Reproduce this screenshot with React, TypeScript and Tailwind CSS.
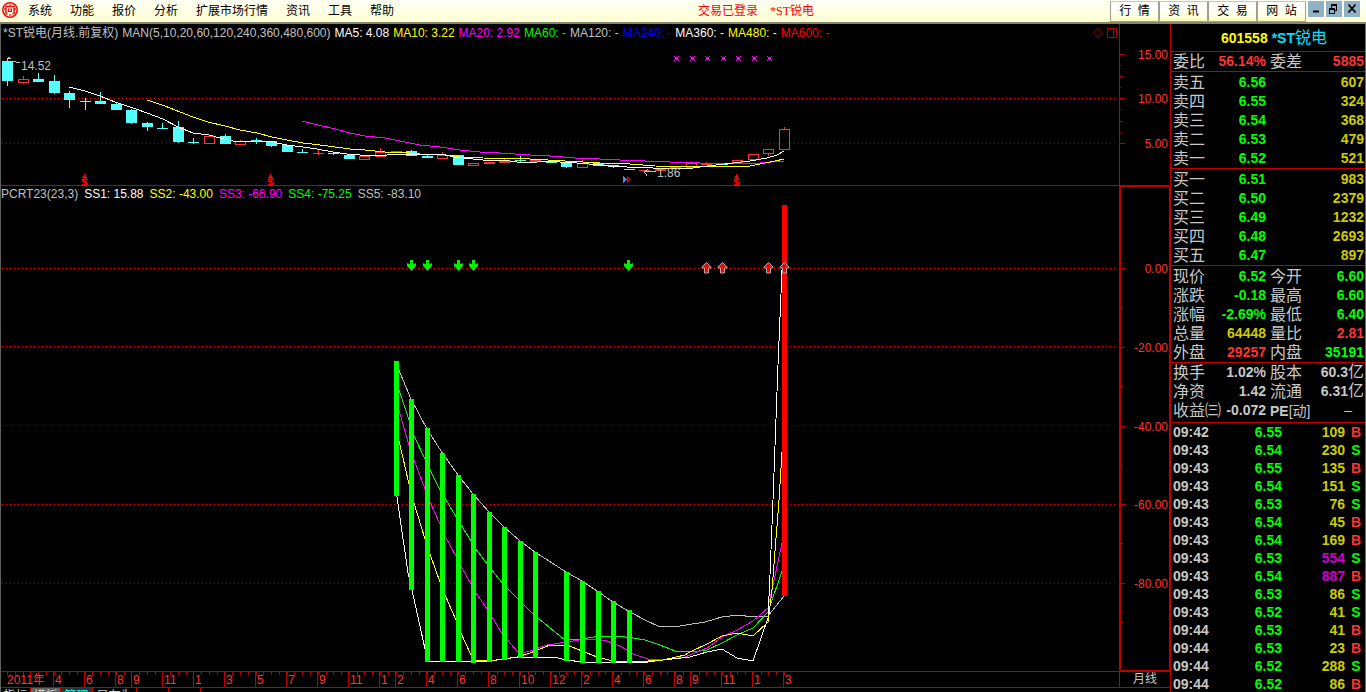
import type { ReactNode } from 'react';

type Candle = {
  kind: 'down' | 'up' | 'flat';
  high: number;
  top: number;
  bottom: number;
  low: number;
};

const menu = ['系统', '功能', '报价', '分析', '扩展市场行情', '资讯', '工具', '帮助'];
const quickLinks = ['行  情', '资  讯', '交  易', '网  站'];

const maLegend = [
  { text: 'MA5: 4.08', color: 'text-white' },
  { text: 'MA10: 3.22', color: 'text-[#ffff00]' },
  { text: 'MA20: 2.92', color: 'text-[#ff00ff]' },
  { text: 'MA60: -', color: 'text-[#00ff00]' },
  { text: 'MA120: -', color: 'text-[#c0c0c0]' },
  { text: 'MA240: -', color: 'text-[#0000ff]' },
  { text: 'MA360: -', color: 'text-white' },
  { text: 'MA480: -', color: 'text-[#ffff00]' },
  { text: 'MA600: -', color: 'text-[#ff0000]' },
];

const ssLegend = [
  { text: 'SS1: 15.88', color: 'text-white' },
  { text: 'SS2: -43.00', color: 'text-[#ffff00]' },
  { text: 'SS3: -66.90', color: 'text-[#ff00ff]' },
  { text: 'SS4: -75.25', color: 'text-[#00ff00]' },
  { text: 'SS5: -83.10', color: 'text-[#c0c0c0]' },
];

// [kind, high, top, bottom, low], one per month
const candleRows: [Candle['kind'], number, number, number, number][] = [
  ['down', 58, 61, 81, 86],
  ['up', 76, 79, 83, 84],
  ['down', 73, 79, 82, 82],
  ['down', 75, 81, 93, 94],
  ['down', 91, 93, 100, 108],
  ['down', 98, 101, 102, 110],
  ['down', 92, 101, 104, 104],
  ['down', 102, 104, 110, 110],
  ['down', 109, 110, 123, 124],
  ['down', 122, 123, 127, 131],
  ['down', 123, 128, 129, 129],
  ['down', 121, 127, 142, 143],
  ['down', 138, 142, 143, 144],
  ['up', 135, 136, 144, 144],
  ['down', 134, 136, 144, 144],
  ['up', 140, 141, 145, 145],
  ['down', 138, 140, 141, 144],
  ['down', 141, 141, 146, 147],
  ['down', 145, 145, 152, 152],
  ['down', 149, 152, 153, 153],
  ['flat', 149, 153, 154, 155],
  ['down', 153, 153, 154, 155],
  ['down', 155, 155, 159, 159],
  ['up', 156, 156, 160, 160],
  ['up', 148, 152, 157, 157],
  ['flat', 151, 151, 153, 153],
  ['down', 150, 151, 156, 156],
  ['down', 155, 156, 158, 158],
  ['up', 152, 155, 159, 159],
  ['down', 155, 155, 165, 165],
  ['up', 163, 163, 166, 166],
  ['flat', 162, 162, 164, 164],
  ['flat', 159, 160, 163, 163],
  ['down', 156, 160, 161, 162],
  ['flat', 159, 160, 162, 162],
  ['down', 161, 161, 163, 163],
  ['down', 162, 162, 167, 168],
  ['up', 160, 163, 168, 168],
  ['down', 162, 163, 166, 166],
  ['down', 165, 165, 167, 168],
  ['down', 169, 169, 170, 170],
  ['flat', 170, 170, 171, 171],
  ['flat', 169, 169, 171, 171],
  ['flat', 167, 167, 169, 169],
  ['up', 163, 163, 168, 168],
  ['flat', 162, 163, 165, 165],
  ['down', 163, 163, 165, 165],
  ['up', 160, 160, 163, 163],
  ['up', 154, 154, 160, 160],
  ['up', 149, 149, 154, 156],
  ['up', 127, 129, 150, 150],
];

const candles: Candle[] = candleRows.map(([kind, high, top, bottom, low]) => ({ kind, high, top, bottom, low }));

const maLines = [
  {
    color: '#ff00ff',
    points:
      '302,121 318,125 335,129 350,133 365,136 385,138 400,141 420,145 440,147 460,150 480,152 500,153 530,155 550,156 575,158 600,159 620,160 645,161 670,162 700,163 730,164 760,163 784,161',
  },
  {
    color: '#ffff00',
    points:
      '147,100 165,106 180,112 193,117 208,122 225,126 240,130 257,133 272,137 287,140 303,143 320,145 335,147 350,149 365,150 385,152 400,152 420,154 445,155 460,157 483,158 530,159 565,161 600,163 630,164 655,166 700,167 730,166 750,166 765,163 775,161 784,159',
  },
  {
    color: '#ffffff',
    points:
      '69,87 85,91 100,96 115,102 133,108 147,113 163,119 178,127 193,133 209,135 220,138 233,141 272,141 277,143 287,145 303,147 317,149 333,152 347,154 360,155 387,155 390,154 400,154 418,155 423,154 443,154 453,157 483,160 510,161 517,162 537,162 543,161 560,162 577,163 600,165 610,166 627,167 653,168 680,169 693,168 707,166 733,163 750,161 767,158 777,155 784,151',
  },
];

const ssLines = [
  {
    color: '#c0c0c0',
    points:
      '396,363 411,399 427,429 443,454 458,475 473,494 489,512 504,527 520,541 535,552 566,572 582,581 597,591 613,602 630,612 645,620 660,627 680,626 705,622 722,617 738,615 753,617 768,616 784,596',
  },
  {
    color: '#00ff00',
    points:
      '396,381 399,390 409,420 414,436 425,459 430,470 440,490 449,505 461,525 471,541 476,549 487,564 503,584 518,599 534,615 565,640 582,639 600,636 617,636 633,638 645,640 660,645 675,651 692,652 707,650 722,643 737,635 753,628 768,612 782,571 784,565',
  },
  {
    color: '#ff00ff',
    points:
      '396,400 399,410 409,445 414,460 425,489 430,502 440,524 445,536 456,556 461,566 471,584 476,593 487,609 492,617 503,635 518,652 522,653 530,651 547,645 567,642 585,639 607,641 622,647 633,654 648,659 665,660 685,657 707,648 722,637 737,630 753,621 768,608 773,585 782,543 784,535',
  },
  {
    color: '#ffffff',
    points:
      '396,490 408,573 412,590 425,649 427,661 460,661 472,662 490,661 503,659 520,657 553,657 567,660 582,662 648,662 663,660 690,657 707,652 722,649 737,658 753,661 768,618 770,575 773,500 778,365 782,270 784,206',
  },
  {
    color: '#ffff00',
    points:
      '396,430 399,441 409,484 414,503 425,539 430,554 440,582 445,595 456,620 461,633 471,655 473,660 497,660 517,657 530,653 550,645 567,645 582,651 597,657 613,661 633,662 648,661 663,660 685,655 690,652 707,644 722,636 737,633 753,636 768,622 772,590 779,500 784,420',
  },
];

// [month index, top, bottom]
const bars = [
  [25, 361, 496],
  [26, 399, 590],
  [27, 428, 662],
  [28, 453, 662],
  [29, 475, 662],
  [30, 494, 663],
  [31, 512, 662],
  [32, 527, 660],
  [33, 541, 658],
  [34, 552, 658],
  [36, 572, 661],
  [37, 581, 663],
  [38, 591, 663],
  [39, 601, 663],
  [40, 610, 663],
];

const months: [number, string][] = [
  [53, '4'], [84, '6'], [115, '8'], [131, '9'], [162, '11'], [193, '1'], [224, '3'], [255, '5'], [286, '7'],
  [317, '9'], [348, '11'], [379, '1'], [395, '2'], [426, '4'], [457, '6'], [488, '8'], [519, '10'], [550, '12'],
  [581, '2'], [612, '4'], [643, '6'], [674, '8'], [690, '9'], [721, '11'], [752, '1'], [783, '3'],
];

const asks = [
  ['卖五', '6.56', '607'],
  ['卖四', '6.55', '324'],
  ['卖三', '6.54', '368'],
  ['卖二', '6.53', '479'],
  ['卖一', '6.52', '521'],
];

const bids = [
  ['买一', '6.51', '983'],
  ['买二', '6.50', '2379'],
  ['买三', '6.49', '1232'],
  ['买四', '6.48', '2693'],
  ['买五', '6.47', '897'],
];

const green = 'text-[#00ff00]';
const red = 'text-[#ff3333]';
const yellow = 'text-[#cccc00]';
const silver = 'text-[#c8c8c8]';

type StatRow = [ReactNode, ReactNode, string, ReactNode, ReactNode, string];

const ratio: StatRow[] = [['委比', '56.14%', red, '委差', '5885', red]];

const quote: StatRow[] = [
  ['现价', '6.52', green, '今开', '6.60', green],
  ['涨跌', '-0.18', green, '最高', '6.60', green],
  ['涨幅', '-2.69%', green, '最低', '6.40', green],
  ['总量', '64448', yellow, '量比', '2.81', red],
  ['外盘', '29257', red, '内盘', '35191', green],
];

const basics: StatRow[] = [
  ['换手', '1.02%', silver, '股本', <Yi key="y">60.3</Yi>, silver],
  ['净资', '1.42', silver, '流通', <Yi key="y">6.31</Yi>, silver],
  [
    '收益㈢',
    '-0.072',
    silver,
    <span key="pe" className="text-sm leading-none"><b>PE</b>[动]</span>,
    <span key="d" className="pr-3 leading-none font-normal">–</span>,
    silver,
  ],
];

const ticks = [
  ['09:42', '6.55', '109', 'B'],
  ['09:43', '6.54', '230', 'S'],
  ['09:43', '6.55', '135', 'B'],
  ['09:43', '6.54', '151', 'S'],
  ['09:43', '6.53', '76', 'S'],
  ['09:43', '6.54', '45', 'B'],
  ['09:43', '6.54', '169', 'B'],
  ['09:43', '6.53', '554', 'S'],
  ['09:43', '6.54', '887', 'B'],
  ['09:43', '6.53', '86', 'S'],
  ['09:43', '6.52', '41', 'S'],
  ['09:44', '6.53', '41', 'B'],
  ['09:44', '6.53', '23', 'B'],
  ['09:44', '6.52', '288', 'S'],
  ['09:44', '6.52', '86', 'B'],
];

const monthX = (i: number) => 7 + Math.round(i * 15.54);

function Yi({ children }: { children: ReactNode }) {
  return (
    <>
      {children}
      <span className="text-base leading-none font-normal">亿</span>
    </>
  );
}

function GridLine({ y, dim }: { y: number; dim?: boolean }) {
  return (
    <line x1="2" x2="100%" y1={y + 0.5} y2={y + 0.5} stroke={dim ? '#900000' : '#f00000'} strokeDasharray="1 3" />
  );
}

function BuyMark({ x }: { x: number }) {
  return (
    <g transform={`translate(${x} 174)`}>
      <path d="M0 3h1V2h1V0h1v2h1v1h1v1H0z" fill="#ff0000" />
      <path
        d="M5.500 6.500c0-2-5-2-5 0s5 1.500 5 3.500-5 2-5 0M3 4v8"
        fill="none"
        stroke="#ff0000"
        strokeWidth="1.500"
        shapeRendering="auto"
      />
    </g>
  );
}

function PriceChart() {
  return (
    <svg className="block w-full flex-1" shapeRendering="crispEdges">
      <g transform="translate(-1 -42)">
        <GridLine y={98} />
        <GridLine y={143} dim />
        {candles.map((c, i) => {
          const x = monthX(i);
          const color = c.kind === 'down' ? '#54ffff' : '#ff3232';
          return (
            <g key={i}>
              <line x1={x + 0.5} x2={x + 0.5} y1={c.high} y2={c.low} stroke={color} />
              {c.kind === 'up' ? (
                <rect x={x - 4.5} y={c.top + 0.5} width="10" height={c.bottom - c.top - 1} fill="#000" stroke={color} />
              ) : (
                <rect x={x - 5} y={c.top} width="11" height={c.bottom - c.top} fill={color} />
              )}
            </g>
          );
        })}
        {maLines.map((l) => (
          <polyline key={l.color} points={l.points} fill="none" stroke={l.color} />
        ))}
        {[676, 692, 707, 723, 738, 754, 769].map((x) => (
          <g key={x} fill="#ff00ff">
            <path d={`M${x - 2} 56h1v1h-1zM${x + 2} 56h1v1h-1zM${x - 2} 60h1v1h-1zM${x + 2} 60h1v1h-1z`} />
            <path d={`M${x - 1} 57h3v3h-3z`} />
          </g>
        ))}
        {[82, 268, 734].map((x) => (
          <BuyMark key={x} x={x} />
        ))}
        <path d="M623 175l4 4.500-4 4.500z" fill="#4a7dff" />
        <path d="M627 175l4 4.500-4 4.500z" fill="#c00000" />
        <path d="M7 61v-3h4M8 57h2M12 61h4M16 62h4" stroke="#c0c0c0" fill="none" />
        <text x="21" y="70" className="fill-[#c0c0c0] text-xs">14.52</text>
        <path d="M644 171.500h12M644 171.500l4-2M644 171.500l3 4" stroke="#c0c0c0" fill="none" />
        <text x="657" y="177" className="fill-[#c0c0c0] text-xs">1.86</text>
      </g>
    </svg>
  );
}

function IndicatorChart() {
  return (
    <svg className="block min-h-0 w-full flex-1" shapeRendering="crispEdges">
      <g transform="translate(-1 -202)">
        <GridLine y={268} />
        <GridLine y={346} />
        <GridLine y={425} dim />
        <GridLine y={504} />
        <GridLine y={583} dim />
        {ssLines.map((l) => (
          <polyline key={l.color} points={l.points} fill="none" stroke={l.color} />
        ))}
        {bars.map(([i, top, bottom]) => (
          <rect key={i} x={monthX(i) - 2} y={top} width="5" height={bottom - top} fill="#00ff00" />
        ))}
        <rect x="782" y="205" width="5" height="391" fill="#ff0000" />
        {[411, 427, 458, 473, 628].map((x) => (
          <path
            key={x}
            d={`M${x - 1} 260h3v4h1l2-1v3l-4.500 5-4.500-5v-3l2 1h1z`}
            fill="#00f000"
            shapeRendering="auto"
          />
        ))}
        {[706, 722, 768, 784].map((x) => (
          <path
            key={x}
            d={`M${x + 0.5} 262.500l4.500 4.500v1h-2.500v5h-4v-5h-2.500v-1z`}
            fill="#ff0000"
            stroke="#b4a8a8"
            shapeRendering="auto"
          />
        ))}
      </g>
    </svg>
  );
}

function PriceAxis() {
  return (
    <div className="border-l border-[#c00000]">
      <svg className="block h-full w-full" shapeRendering="crispEdges">
        <path d="M0 30.500h5M0 74.500h5M0 119.500h5M0 52.500h3M0 97.500h3M0 41.500h1M0 63.500h1M0 85.500h1M0 108.500h1" stroke="#c00000" />
        <g className="fill-[#ff3333] text-xs" textAnchor="end">
          <text x="48" y="35">15.00</text>
          <text x="48" y="79">10.00</text>
          <text x="48" y="124">5.00</text>
        </g>
      </svg>
    </div>
  );
}

function IndicatorAxis() {
  return (
    <div className="border-y border-r border-l-2 border-[#c00000]">
      <svg className="block h-full w-full" shapeRendering="crispEdges">
        {['0.00', '-20.00', '-40.00', '-60.00', '-80.00'].map((label, i) => {
          const y = 81 + Math.round(i * 78.8);
          return (
            <g key={label}>
              <path d={`M0 ${y + 0.5}h4M0 ${y + 39.5}h2`} stroke="#c00000" />
              <text x="47" y={y + 5} textAnchor="end" className="fill-[#ff3333] text-xs">{label}</text>
            </g>
          );
        })}
      </svg>
    </div>
  );
}

function TimeAxis() {
  return (
    <svg className="block h-full w-full" shapeRendering="crispEdges">
      {Array.from({ length: 101 }, (_, i) => (
        <line key={i} x1={Math.round(i * 7.77) + 6.5} x2={Math.round(i * 7.77) + 6.5} y1="0" y2="3" stroke="#c00000" />
      ))}
      <text x="6" y="12" className="fill-[#ff3333] text-xs">2011年</text>
      {months.map(([x, label]) => (
        <g key={x}>
          <line x1={x - 0.5} x2={x - 0.5} y1="0" y2="15" stroke="#c00000" />
          <text x={x + 1} y="12" className="fill-[#ff3333] text-xs">{label}</text>
        </g>
      ))}
    </svg>
  );
}

function BookTable({ rows, label }: { rows: string[][]; label: string }) {
  return (
    <table aria-label={label} className="w-full table-fixed border-collapse text-sm leading-[19px] font-bold">
      <colgroup>
        <col className="w-[40px]" />
        <col className="w-[55px]" />
        <col />
      </colgroup>
      <tbody>
        {rows.map(([name, price, volume]) => (
          <tr key={name} className="h-[19px]">
            <th className="p-0 pl-0.5 text-left text-base leading-[19px] font-normal text-[#c8c8c8]">{name}</th>
            <td className="p-0 text-right text-[#00ff00]">{price}</td>
            <td className="p-0 pr-px text-right text-[#cccc00]">{volume}</td>
          </tr>
        ))}
      </tbody>
    </table>
  );
}

function StatTable({ rows, label }: { rows: StatRow[]; label: string }) {
  return (
    <table aria-label={label} className="w-full table-fixed border-collapse text-sm leading-[19px] font-bold whitespace-nowrap">
      <colgroup>
        <col className="w-[36px]" />
        <col className="w-[59px]" />
        <col className="w-[36px]" />
        <col />
      </colgroup>
      <tbody>
        {rows.map(([a, av, ac, b, bv, bc], i) => (
          <tr key={i} className="h-[19px]">
            <th className="p-0 pl-0.5 text-left text-base leading-[19px] font-normal text-[#c8c8c8]">{a}</th>
            <td className={`p-0 text-right ${ac}`}>{av}</td>
            <th className="p-0 pl-1 text-left text-base leading-[19px] font-normal text-[#c8c8c8]">{b}</th>
            <td className={`p-0 pr-px text-right ${bc}`}>{bv}</td>
          </tr>
        ))}
      </tbody>
    </table>
  );
}

function TickTable() {
  return (
    <table aria-label="分笔成交" className="w-full table-fixed border-collapse text-sm leading-[18px] font-bold">
      <colgroup>
        <col className="w-[40px]" />
        <col className="w-[71px]" />
        <col className="w-[63px]" />
        <col />
      </colgroup>
      <tbody>
        {ticks.map(([time, price, volume, side], i) => (
          <tr key={i} className="h-[18px]">
            <td className="p-0 pl-0.5 text-[#c8c8c8]">{time}</td>
            <td className="p-0 text-right text-[#00ff00]">{price}</td>
            <td className={`p-0 text-right ${Number(volume) >= 500 ? 'text-[#cc00cc]' : 'text-[#cccc00]'}`}>{volume}</td>
            <td className={`p-0 pl-0.5 text-center ${side === 'B' ? 'text-[#ff3333]' : 'text-[#00ff00]'}`}>{side}</td>
          </tr>
        ))}
      </tbody>
    </table>
  );
}

function TopBar() {
  return (
    <header className="flex h-[24px] shrink-0 items-start border-b-2 border-[#85856c] bg-linear-to-b from-[#fffff4] to-[#ffffd2] text-xs text-black">
      <svg className="mt-0.5 ml-0.5 h-4 w-4" viewBox="0 0 16 16" fill="none" stroke="#ee1010">
        <circle cx="8" cy="8" r="7.200" strokeWidth="1.600" />
        <path d="M4 12V4.500h8V12M2 7h2M12 7h2M3 10h1M12 10h1" strokeWidth="1.400" />
        <path d="M6.500 7h3v2.500h-3zM4 12h2M10 12h2M8 2v2M8 12v2" strokeWidth="1.200" />
      </svg>
      <nav className="ml-2.5 flex h-[22px] items-center gap-[18px] leading-4">
        {menu.map((item) => (
          <button key={item} type="button">{item}</button>
        ))}
      </nav>
      <div className="flex h-[22px] flex-1 items-center justify-center gap-3 pl-2 leading-4 text-[#ff0000]">
        <span>交易已登录</span>
        <span className="font-['Liberation_Serif','Noto_Sans_CJK_SC',serif]">*ST锐电</span>
      </div>
      <div className="mt-px flex">
        {quickLinks.map((item) => (
          <button
            key={item}
            type="button"
            className="h-[21px] w-[49px] border border-[#a0a090] border-t-[#c8c8b8] bg-linear-to-b from-white via-[#fffff4] to-[#ffffc0] text-center leading-[19px] whitespace-pre"
          >
            {item}
          </button>
        ))}
      </div>
      <div className="mt-px mr-1.5 ml-0.5 flex gap-0.5">
        <button type="button" aria-label="最小化" className="h-4 w-4 bg-[#8fb2c6]">
          <svg viewBox="0 0 16 16"><path d="M5 10.500h6" stroke="#000" strokeWidth="2" /></svg>
        </button>
        <button type="button" aria-label="还原" className="h-4 w-4 bg-[#8fb2c6]">
          <svg viewBox="0 0 16 16" fill="none" stroke="#000" shapeRendering="crispEdges">
            <path d="M5 4h6M3 7.500h6" strokeWidth="2" />
            <path d="M5.500 4v3M10.500 4v5h-2M3.500 7v5h5V7" />
          </svg>
        </button>
        <button type="button" aria-label="关闭" className="h-4 w-4 bg-[#8fb2c6]">
          <svg viewBox="0 0 16 16"><path d="M4.500 3.500l7 8M11.500 3.500l-7 8" stroke="#000" strokeWidth="1.800" /></svg>
        </button>
      </div>
    </header>
  );
}

export default function App() {
  return (
    <div className="flex h-screen flex-col overflow-hidden bg-black font-['Liberation_Sans','Noto_Sans_CJK_SC',sans-serif]">
      <TopBar />
      <div className="flex min-h-0 flex-1">
        <main className="flex min-w-0 flex-1 flex-col border-l border-[#606060]">
          <section className="grid h-[162px] shrink-0 grid-cols-[1fr_51px] border-b border-[#c00000]">
            <div className="flex min-w-0 flex-col">
              <div className="flex h-[18px] shrink-0 items-center gap-1 overflow-hidden pl-0.5 text-xs leading-4 whitespace-nowrap text-[#c0c0c0]">
                <span>*ST锐电(月线.前复权)</span>
                <span>MAN(5,10,20,60,120,240,360,480,600)</span>
                {maLegend.map((m) => (
                  <span key={m.text} className={m.color}>{m.text}</span>
                ))}
                <svg className="mr-0.5 ml-auto h-3 w-6" viewBox="0 0 24 12" fill="none" stroke="#b00000">
                  <path d="M5 1.500l4.500 4.500-4.500 4.500-4.500-4.500z" />
                  <path d="M14.500 1.500h9v9h-9zM20.500 1.500v9" shapeRendering="crispEdges" />
                </svg>
              </div>
              <PriceChart />
            </div>
            <PriceAxis />
          </section>

          <section className="grid min-h-0 flex-1 grid-cols-[1fr_51px]">
            <div className="flex min-h-0 min-w-0 flex-col">
              <div className="flex h-4 shrink-0 items-center gap-1.5 text-xs leading-4 whitespace-nowrap text-[#c0c0c0]">
                <span>PCRT23(23,3)</span>
                {ssLegend.map((s) => (
                  <span key={s.text} className={s.color}>{s.text}</span>
                ))}
              </div>
              <IndicatorChart />
            </div>
            <IndicatorAxis />
          </section>

          <section className="grid h-[17px] shrink-0 grid-cols-[1fr_51px] border-y border-[#c00000]">
            <TimeAxis />
            <div className="border-l border-[#c00000] text-center text-xs leading-[15px] text-[#c8c8c8]">月线</div>
          </section>

          <div className="flex h-1 shrink-0 overflow-hidden text-xs leading-[14px] text-[#d0d0d0]">
            <button type="button" className="h-4 w-[30px] border-r border-[#c00000]">指标</button>
            <button type="button" className="h-4 w-[30px] border-r border-[#c00000] bg-[#606060]">模板</button>
            <button type="button" className="h-4 w-[32px] border-r border-[#c00000] bg-[#303030] text-[#00ffff]">管理</button>
            <button type="button" className="h-4 w-[44px] border-r border-[#c00000]">另存为</button>
            <span className="h-4 w-[32px] border-r border-[#c00000]" />
            <span className="h-4 w-[32px] border-r border-[#c00000]" />
          </div>
        </main>

        <aside className="w-[196px] shrink-0 overflow-hidden border-r border-l border-r-[#707070] border-l-[#c00000]">
          <h1 className="flex h-[28px] items-center justify-center gap-1 border-b border-[#c00000] pl-3 text-sm leading-5 font-bold">
            <span className="text-[#ffff00]">601558</span>
            <span className="text-[#00e0ff]">
              *ST<span className="text-base leading-5 font-normal">锐电</span>
            </span>
          </h1>
          <div className="border-b border-[#c00000]">
            <StatTable rows={ratio} label="委比委差" />
          </div>
          <div className="border-b border-[#c00000] pt-px">
            <BookTable rows={asks} label="卖盘" />
          </div>
          <div className="border-b border-[#c00000] pt-px">
            <BookTable rows={bids} label="买盘" />
          </div>
          <div className="border-b border-[#c00000] pt-px">
            <StatTable rows={quote} label="行情" />
          </div>
          <div className="border-b border-[#c00000] pb-0.5">
            <StatTable rows={basics} label="基本面" />
          </div>
          <TickTable />
        </aside>
      </div>
    </div>
  );
}
